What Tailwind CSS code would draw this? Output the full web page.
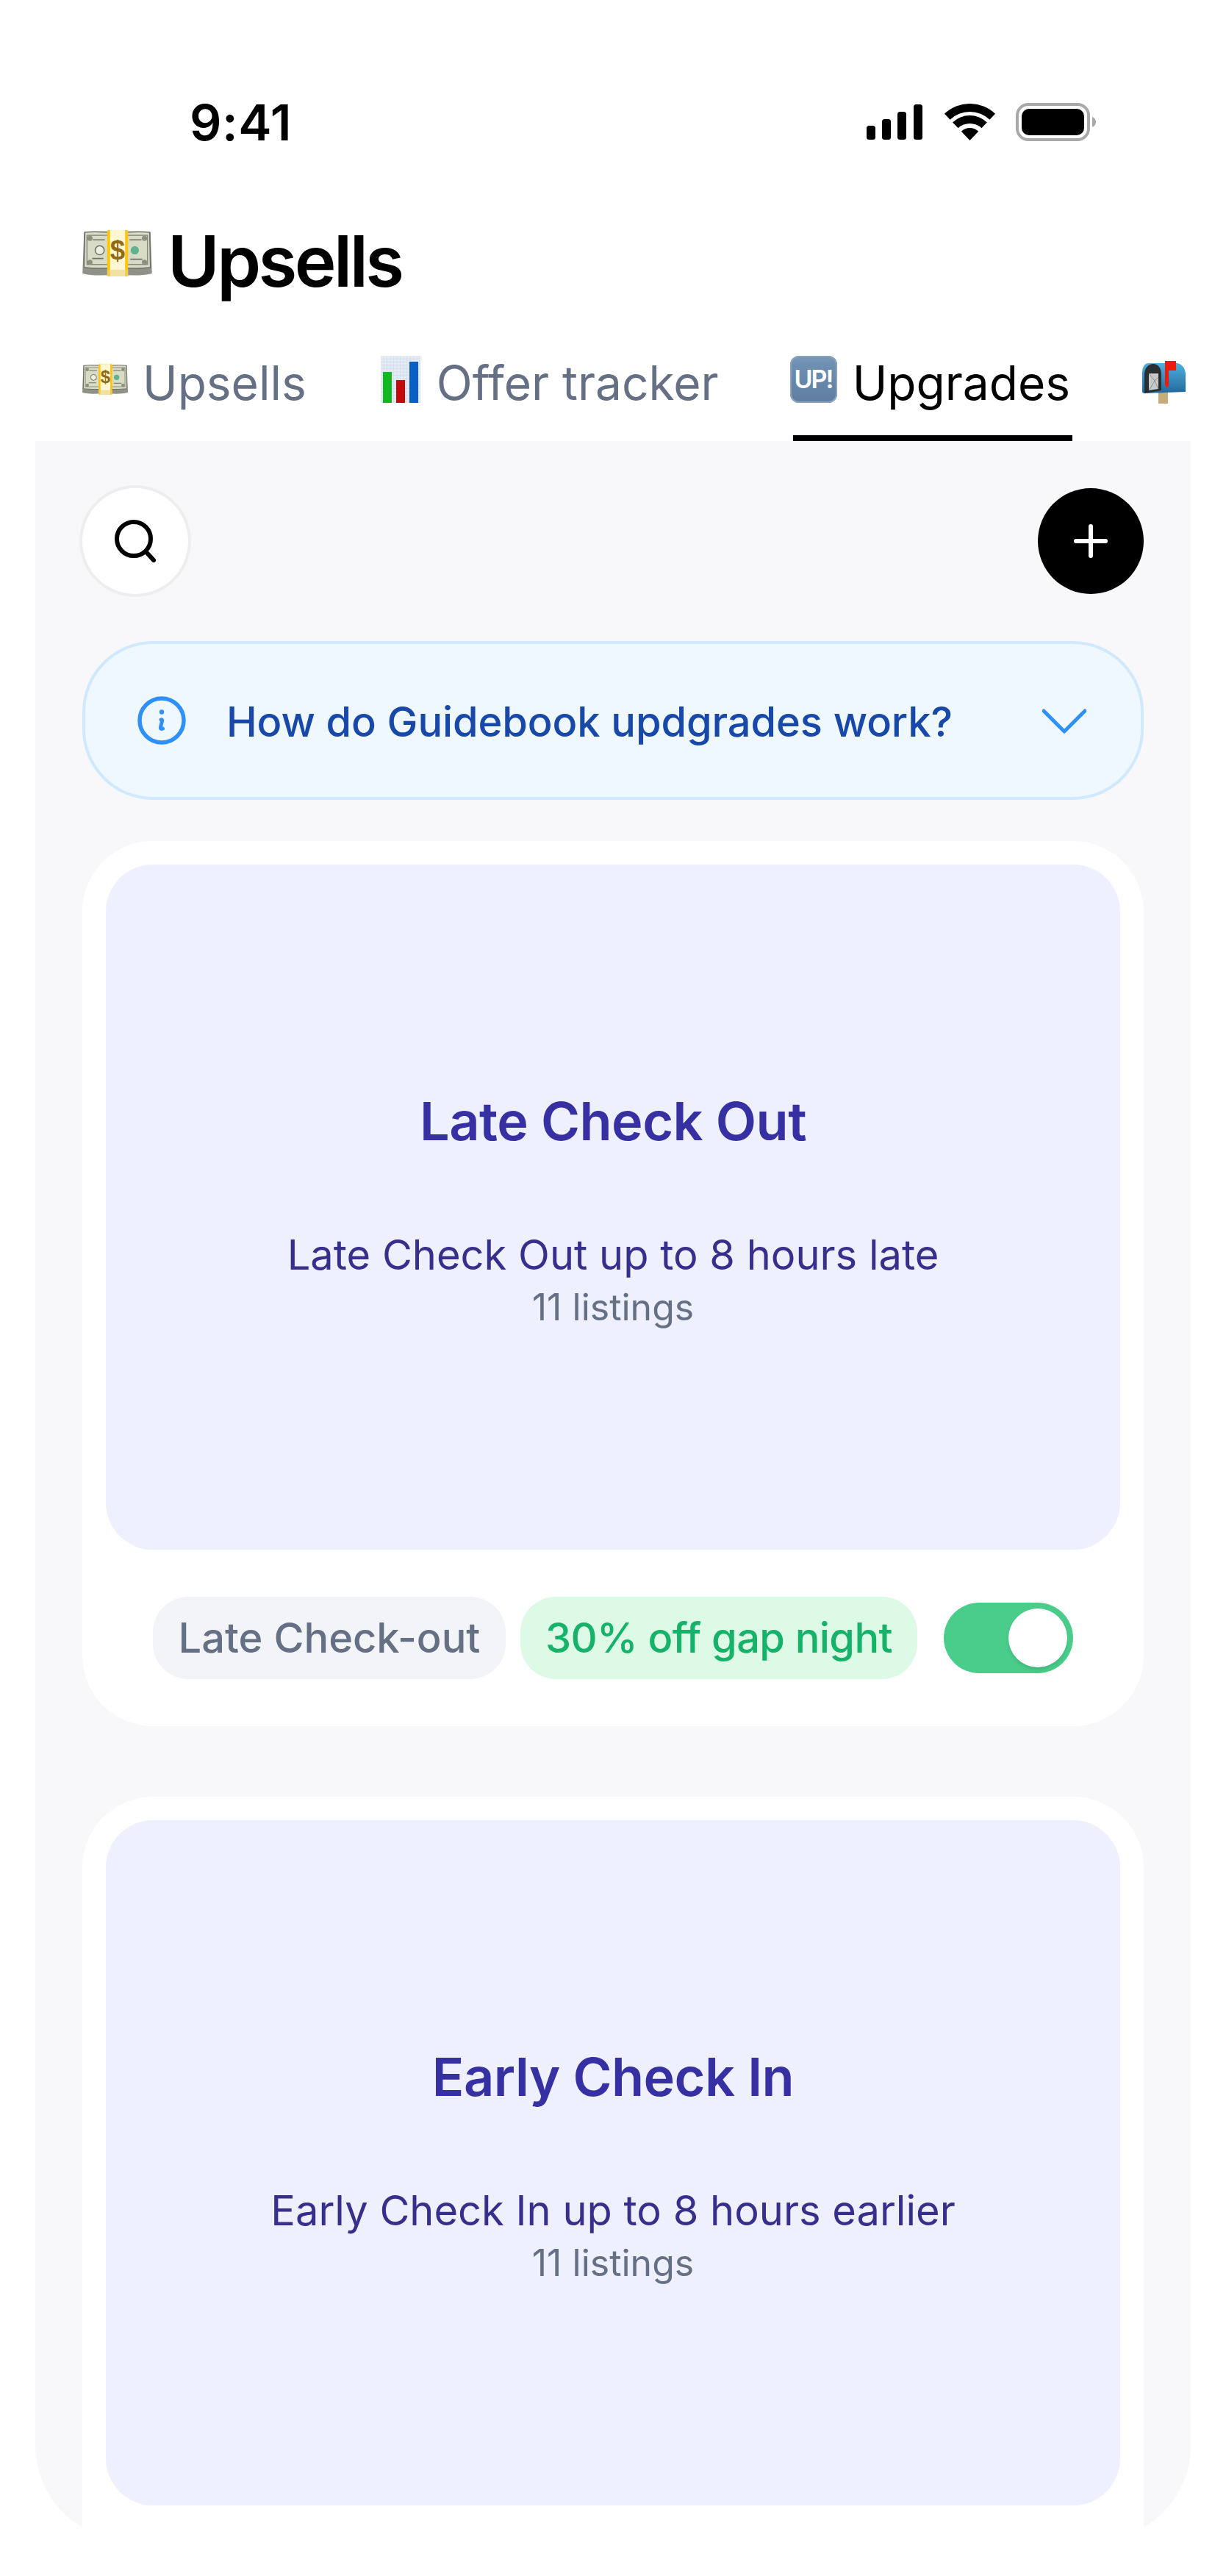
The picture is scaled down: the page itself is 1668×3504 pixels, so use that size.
<!DOCTYPE html>
<html>
<head>
<meta charset="utf-8">
<script src="https://cdn.jsdelivr.net/npm/@tailwindcss/browser@4"></script>
</head>
<body class="m-0 bg-white">
<svg width="0" height="0" class="absolute">
  <defs>
    <symbol id="money" viewBox="0 0 93 62">
      <path d="M2 3 C16 1 30 3 46 2 C62 3 76 1 91 3 L93 58 C78 62 62 60 46 60 C30 60 14 62 0 58 Z" fill="#8f9288"/>
      <path d="M3 3 C16 1 30 3 46 3 C62 3 76 1 90 3 L91 50 C76 52 62 51 46 51 C30 51 16 52 2 50 Z" fill="#d8dbc6" stroke="#6f7268" stroke-width="1.6"/>
      <rect x="6" y="7" width="81" height="39" fill="none" stroke="#878a7a" stroke-width="1.4"/>
      <circle cx="10" cy="11" r="3.5" fill="#8d9080"/><circle cx="83" cy="11" r="3.5" fill="#8d9080"/><circle cx="10" cy="43" r="3.5" fill="#8d9080"/><circle cx="83" cy="43" r="3.5" fill="#8d9080"/>
      <circle cx="23" cy="27" r="6" fill="#eceee0" stroke="#6f7268" stroke-width="1.5"/>
      <circle cx="70" cy="27" r="5.5" fill="#5fb38e"/>
      <path d="M14 13 H30 M63 13 H79 M13 38 H28 M64 39 H80" stroke="#6f7268" stroke-width="1.6"/>
      <rect x="33" y="0" width="28" height="62" rx="1.5" fill="#ffc60f"/>
      <rect x="37" y="0" width="20" height="62" fill="#fff6d2"/>
      <rect x="33" y="53" width="28" height="9" fill="#e8cf7c" opacity=".55"/>
      <text x="47" y="39" text-anchor="middle" font-family="Liberation Sans" font-size="36" font-weight="700" fill="#8f6b14">$</text>
    </symbol>
    <pattern id="chartgrid" width="4.5" height="4.5" patternUnits="userSpaceOnUse">
      <path d="M4.5 0 V4.5 M0 4.5 H4.5" stroke="#c5d3e6" stroke-width=".8" fill="none"/>
    </pattern>
    <linearGradient id="upg" x1="0" y1="0" x2="0" y2="1"><stop offset="0" stop-color="#7d9ab8"/><stop offset=".2" stop-color="#6e8fb2"/><stop offset="1" stop-color="#5f7e9f"/></linearGradient>
    <linearGradient id="boxg" x1="0" y1="0" x2="0" y2="1"><stop offset="0" stop-color="#4fb0dd"/><stop offset="1" stop-color="#22689c"/></linearGradient>
  </defs>
</svg>
<div class="relative flex h-[3504px] w-[1668px] flex-col overflow-hidden bg-white font-['Inter',sans-serif]">
  <!-- status bar -->
  <div class="mt-[136px] flex h-[60px] items-center justify-between pl-[258px] pr-[177px]">
    <span class="text-[68px] leading-[60px] font-semibold tracking-[0.5px] text-black">9:41</span>
    <div class="flex items-center">
      <svg width="76" height="48" viewBox="0 0 76 48" class="mr-[30px]">
        <rect x="0" y="29" width="12" height="19" rx="3.5"/><rect x="21" y="20" width="12" height="28" rx="3.5"/><rect x="42" y="10" width="12" height="38" rx="3.5"/><rect x="64" y="0" width="12" height="48" rx="3.5"/>
      </svg>
      <svg width="69" height="50" viewBox="0 0 69 50" class="mr-[28px]">
        <path d="M34.5 50 L22.8 37.7 A17 17 0 0 1 46.2 37.7 Z"/>
        <path d="M18.6 33.3 A23 23 0 0 1 50.4 33.3 L57.9 25.4 A34 34 0 0 0 11 25.4 Z"/>
        <path d="M7.6 21.8 A39 39 0 0 1 61.4 21.8 L69 13.8 A50 50 0 0 0 0 13.8 Z"/>
      </svg>
      <svg width="109" height="52" viewBox="0 0 109 52">
        <rect x="2" y="2" width="97" height="48" rx="15" fill="none" stroke="#a9a9a9" stroke-width="4"/>
        <rect x="8" y="8" width="85" height="36" rx="10" fill="#000"/>
        <path d="M104 19 C107 20 109 23 109 26 C109 29 107 32 104 33 Z" fill="#a9a9a9"/>
      </svg>
    </div>
  </div>

  <!-- title -->
  <div class="mt-[99px] flex h-[120px] items-center pl-[112px]">
    <svg width="95" height="63" class="shrink-0 -mt-[22px]"><use href="#money"/></svg>
    <h1 class="ml-[21px] text-[96px] leading-[120px] font-semibold tracking-[-3.5px] text-black">Upsells</h1>
  </div>

  <!-- tabs -->
  <div class="mt-[66px] flex gap-[100px] pl-[112px]">
    <div class="flex shrink-0 items-start border-b-8 border-transparent pb-[31px]">
      <svg width="62" height="42" class="mt-[14px] mr-[20px] shrink-0"><use href="#money"/></svg>
      <span class="text-[64px] leading-[80px] font-normal text-[#667085]">Upsells</span>
    </div>
    <div class="flex shrink-0 items-start border-b-8 border-transparent pr-[1px] pb-[31px]">
      <svg width="54" height="64" viewBox="0 0 54 64" class="mt-[3px] ml-[1px] mr-[22px] shrink-0">
        <rect width="54" height="64" fill="#e4ebf4"/><rect width="54" height="64" fill="url(#chartgrid)"/>
        <rect x="3" y="22" width="12" height="42" fill="#10b91f"/>
        <rect x="21" y="33" width="12" height="31" fill="#c20a0a"/>
        <rect x="39" y="8" width="12" height="56" fill="#0a5fc7"/>
      </svg>
      <span class="text-[64px] leading-[80px] font-normal text-[#667085]">Offer tracker</span>
    </div>
    <div class="flex w-[380px] shrink-0 items-start border-b-8 border-black pb-[31px]">
      <svg width="64" height="64" viewBox="0 0 64 64" class="mt-[3px] -ml-[4px] mr-[21px] shrink-0">
        <rect width="64" height="64" rx="12" fill="url(#upg)"/>
        <rect x="1" y="1" width="62" height="62" rx="11" fill="none" stroke="#8aa2bb" stroke-width="2"/>
        <text x="31.5" y="44" text-anchor="middle" font-family="Inter" font-size="34" font-weight="600" letter-spacing="-2" fill="#fff">UP!</text>
      </svg>
      <span class="text-[64px] leading-[80px] font-normal text-black">Upgrades</span>
    </div>
    <div class="flex shrink-0 items-start pb-[31px]">
      <svg width="60" height="58" viewBox="0 0 60 58" class="mt-[10px] -ml-[5px] shrink-0">
        <rect x="22" y="40" width="13" height="18" fill="#c8ad7c"/>
        <path d="M8 3 H46 C54 3 59 10 59 19 V42 L3 44 C1 44 0 43 0 41 V18 C0 9 2 4 8 3 Z" fill="url(#boxg)"/>
        <path d="M3 44 V18 C3 9 9 4 15 4 C21 4 26 9 26 18 V40 Z" fill="#2a2f33"/>
        <path d="M9 17 H22 V38 L9 40 Z" fill="#c8c9c9"/>
        <path d="M9 17 L17 27 L9 40 M22 22 L17 27 L22 38" fill="none" stroke="#8d8e8e" stroke-width="1"/>
        <path d="M31 0 H46 V13 H36 V34 L33 36 L31 33 Z" fill="#ec1c0c"/>
      </svg>
    </div>
  </div>

  <!-- panel -->
  <main class="mx-[48px] h-[2856px] overflow-hidden rounded-b-[130px] bg-[#f8f8fa] px-[64px] pt-[64px]">
    <div class="flex items-center justify-between">
      <button class="flex size-[144px] items-center justify-center rounded-full bg-white ring-4 ring-[#eeeeee]">
        <svg width="56" height="58" viewBox="0 0 56 58" fill="none" stroke="#000" stroke-width="6" stroke-linecap="round"><circle cx="26" cy="26" r="23"/><path d="M43 44 L53 55"/></svg>
      </button>
      <button class="flex size-[144px] items-center justify-center rounded-full bg-black">
        <svg width="48" height="48" viewBox="0 0 48 48" fill="none" stroke="#fff" stroke-width="6" stroke-linecap="round"><path d="M24 4 V44 M4 24 H44"/></svg>
      </button>
    </div>

    <div class="mt-[64px] flex h-[216px] items-center rounded-[96px] border-4 border-[#d1e9ff] bg-[#eff8ff] pl-[71px] pr-[74px]">
      <svg width="66" height="66" viewBox="0 0 66 66" fill="none" class="shrink-0">
        <circle cx="33" cy="33" r="30" stroke="#2e90fa" stroke-width="5.5"/>
        <circle cx="33" cy="21.5" r="3.2" fill="#2e90fa"/>
        <path d="M32 32 C33.5 31.5 34 32.5 33.5 34 L31.5 42 C31 44 32.5 45 34.5 44" stroke="#2e90fa" stroke-width="5" stroke-linecap="round"/>
      </svg>
      <span class="mt-[4px] ml-[55px] flex-1 text-[56px] leading-[72px] font-medium tracking-[-0.1px] text-[#1849a9]">How do Guidebook updgrades work?</span>
      <svg width="60" height="34" viewBox="0 0 60 34" fill="none" stroke="#2e90fa" stroke-width="5" stroke-linecap="round" stroke-linejoin="round" class="mt-[2px] shrink-0"><path d="M2 3 L30 31 L58 3"/></svg>
    </div>

    <article class="mt-[56px] rounded-[96px] bg-white px-[32px] pt-[32px] pb-[64px]">
      <div class="flex h-[932px] flex-col items-center justify-center rounded-[64px] bg-[#eef0fd] pt-[6px] text-center">
        <h2 class="text-[72px] leading-[90px] font-semibold tracking-[-0.5px] text-[#3730a3]">Late Check Out</h2>
        <p class="mt-[95px] text-[56px] leading-[84px] font-normal text-[#362f8c]">Late Check Out up to 8 hours late</p>
        <p class="-mt-[3px] text-[50px] leading-[64px] font-normal text-[#667085]">11 listings</p>
      </div>
      <div class="mt-[64px] flex items-center justify-center">
        <span class="flex h-[112px] w-[480px] items-center justify-center rounded-[48px] bg-[#f2f4f7] text-[56px] font-medium text-[#667085]">Late Check-out</span>
        <span class="ml-[20px] flex h-[112px] w-[540px] items-center justify-center rounded-[48px] bg-[#dcfae6] text-[56px] font-medium tracking-[-0.6px] text-[#17b26a]">30% off gap night</span>
        <span class="ml-[36px] flex h-[96px] w-[176px] items-center justify-end rounded-full bg-[#4acd8a] pr-[8px]">
          <span class="size-[80px] rounded-full bg-white shadow-md"></span>
        </span>
      </div>
    </article>

    <article class="mt-[96px] rounded-t-[96px] bg-white px-[32px] pt-[32px] pb-[200px]">
      <div class="flex h-[932px] flex-col items-center justify-center rounded-[64px] bg-[#eef0fd] pt-[6px] text-center">
        <h2 class="text-[72px] leading-[90px] font-semibold tracking-[-0.5px] text-[#3730a3]">Early Check In</h2>
        <p class="mt-[95px] text-[56px] leading-[84px] font-normal text-[#362f8c]">Early Check In up to 8 hours earlier</p>
        <p class="-mt-[3px] text-[50px] leading-[64px] font-normal text-[#667085]">11 listings</p>
      </div>
    </article>
  </main>
</div>
</body>
</html>
